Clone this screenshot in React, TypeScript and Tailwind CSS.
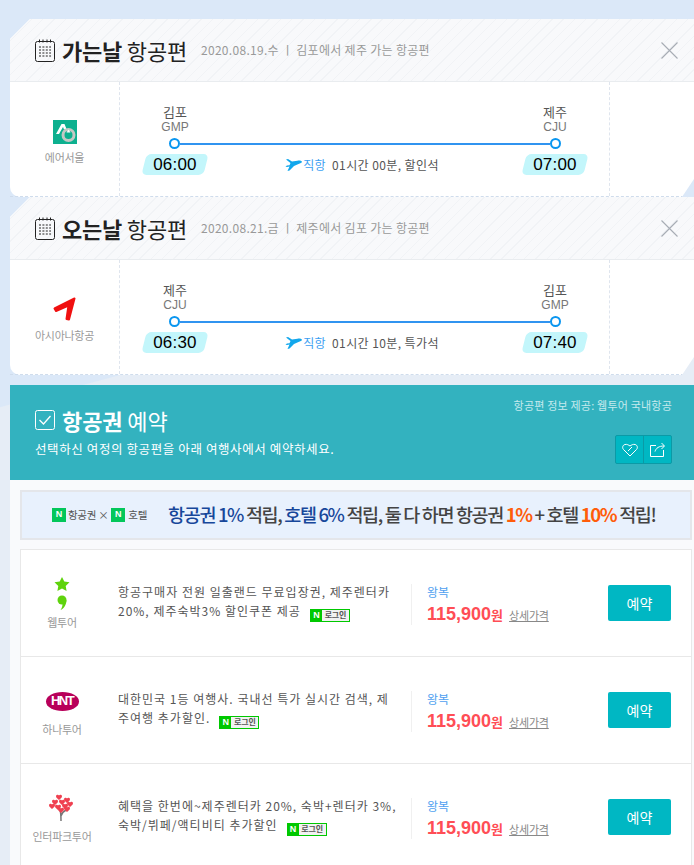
import React from 'react';

const KR = 'font-["Noto_Sans_CJK_KR","Noto_Sans",sans-serif]';

function CalendarIcon() {
  return (
    <svg width="20" height="23" viewBox="0 0 20 23" fill="none" stroke="#222" strokeWidth="1">
      <rect x="0.5" y="2.5" width="19" height="20" rx="2" />
      <path d="M4.5 0.5v3M8 0.5v3M12 0.5v3M15.5 0.5v3" />
      <path d="M4 8h12M4 11h12M4 14h12M4 17h12" strokeDasharray="2 1.4" />
    </svg>
  );
}

function PlaneIcon() {
  return (
    <svg width="17" height="14" viewBox="0 0 17 14" fill="#12a7ec">
      <path d="M1 1.5 3 1l4 2.6 5.5-.9c2-.3 4 .2 4.500 1 .2.700-1.500 1.600-3.500 2.300L9 8l-4.500 4.500-2 .5 2-4.500L2 9 .5 8.500 2 7.500 4.500 7.300 5.500 5z" />
    </svg>
  );
}

function AirSeoulLogo() {
  return (
    <svg width="24" height="24" viewBox="0 0 24 24">
      <rect width="24" height="24" fill="#0db08f" />
      <path d="M3 14 8.500 4h3l2 5-2.500.5L10 7l-4 7z" fill="#fff" />
      <circle cx="15.500" cy="15" r="5.500" fill="none" stroke="#c4c8c4" strokeWidth="3" />
      <path d="M15.500 9.500l-2 3h4z" fill="#fff" />
    </svg>
  );
}

function AsianaLogo() {
  return (
    <svg width="25" height="25" viewBox="0 0 25 25">
      <path
        d="M2.500 11.500 22.500 1.500 17 22.500 14.500 22 16.500 8.500 4 14z"
        fill="#f01010"
        stroke="#f01010"
        strokeWidth="2"
        strokeLinejoin="round"
      />
    </svg>
  );
}

function WebtourLogo() {
  return (
    <svg width="16" height="34" viewBox="0 0 16 34" fill="#5fd30d">
      <path d="M8 0l2.300 4.600 5.200.7-3.800 3.600.9 5.100L8 11.600 3.400 14l.9-5.100L.5 5.300l5.200-.7z" />
      <circle cx="8" cy="23" r="4.500" />
      <path d="M12.500 23c0 5-3 9-6 10 1.500-2 2-4 2-6z" />
    </svg>
  );
}

function HntLogo() {
  return (
    <div className="flex h-[19px] w-[33px] items-center justify-center rounded-[50%] bg-[#b8005a] font-['Liberation_Sans',sans-serif] text-[13px] font-bold tracking-[-1.500px] text-white">
      HNT
    </div>
  );
}

function TreeLogo() {
  const hearts = [
    [10, 3], [6, 8], [13, 8], [18, 6], [3, 12], [9, 13], [16, 12], [21, 10], [18, 15], [12, 16],
  ];
  return (
    <svg width="26" height="28" viewBox="0 0 26 28">
      <path d="M12 27c0-5 0-8-1-11M12 22c1-3 3-5 5-6" stroke="#777" strokeWidth="1.500" fill="none" />
      {hearts.map(([x, y], i) => (
        <path key={i} transform={`translate(${x} ${y})`} d="M0 -1.500a1.600 1.600 0 0 0-3 .8C-3 1 -1 2 0 3 1 2 3 1 3-.7a1.600 1.600 0 0 0-3-.8z" fill="#ef4050" />
      ))}
    </svg>
  );
}

function NaverLogin() {
  return (
    <span className="ml-[9px] inline-flex h-[13px] w-[40px] items-stretch border border-[#00c800] align-[-2px] leading-none tracking-normal">
      <span className="flex w-[11px] items-center justify-center bg-[#00c800] font-['Liberation_Sans',sans-serif] text-[9px] font-bold text-white">N</span>
      <span className="flex flex-1 items-center justify-center bg-[#f2f2f2] text-[8px] font-bold tracking-[-0.200px] text-[#555]">로그인</span>
    </span>
  );
}

function TimeTag({ time }: { time: string }) {
  return (
    <div className="relative flex h-[21px] w-[62px] items-center justify-center">
      <span className="absolute inset-0 -skew-x-[14deg] rounded-[5px] bg-[#c3f6fb]" />
      <span className="relative font-['Liberation_Sans',sans-serif] text-[17px] tracking-[0.200px] text-black">{time}</span>
    </div>
  );
}

function FlightCard({
  title,
  titleRest,
  info,
  airline,
  logo,
  from,
  fromCode,
  to,
  toCode,
  dep,
  arr,
  detail,
}: {
  title: string;
  titleRest: string;
  info: string;
  airline: string;
  logo: React.ReactNode;
  from: string;
  fromCode: string;
  to: string;
  toCode: string;
  dep: string;
  arr: string;
  detail: string;
}) {
  return (
    <section className="h-[178px] [clip-path:polygon(20px_0,100%_0,100%_160px,calc(100%-12px)_100%,20px_100%,0_100%,0_20px)] bg-white rounded-bl-[10px]">
      <div className="flex h-[63px] items-center border-b border-[#e9ecef] bg-[repeating-linear-gradient(135deg,#f8f9fb_0,#f8f9fb_7px,#f1f3f6_7px,#f1f3f6_8px)] pl-[25px] pr-[16px]">
        <CalendarIcon />
        <h2 className="ml-[7px] text-[22px] leading-none tracking-[-0.200px] text-[#222]">
          <b className="font-bold">{title}</b> {titleRest}
        </h2>
        <p className="ml-[14px] text-[12px] tracking-[0.300px] text-[#999]">{info}</p>
        <svg className="ml-auto" width="17" height="17" viewBox="0 0 17 17" stroke="#a7adb5" strokeWidth="1.100">
          <path d="M.5.5l16 16M16.500.5l-16 16" />
        </svg>
      </div>
      <div className="flex h-[115px] border-b border-dashed border-[#cfdcec]">
        <div className="flex w-[110px] flex-col items-center border-r border-dashed border-[#dfe5ee]">
          <div className="mt-[37px] flex h-[25px] items-center justify-center">{logo}</div>
          <p className="mt-[5px] text-[11px] tracking-[-0.300px] text-[#999]">{airline}</p>
        </div>
        <div className="w-[490px] border-r border-dashed border-[#dfe5ee] pl-[24px] pr-[23px] pt-[21px]">
          <div className="flex justify-between">
            {[[from, fromCode], [to, toCode]].map(([name, code]) => (
              <div key={code} className="w-[62px] text-center">
                <p className="text-[13px] leading-[17px] text-[#555]">{name}</p>
                <p className="font-['Liberation_Sans',sans-serif] text-[12px] leading-[15px] text-[#777]">{code}</p>
              </div>
            ))}
          </div>
          <div className="mt-[3px] flex h-[11px] items-center px-[25px]">
            <span className="h-[11px] w-[11px] shrink-0 rounded-full border-2 border-[#0a96f0] bg-white" />
            <span className="h-[2px] flex-1 bg-[#3094f0]" />
            <span className="h-[11px] w-[11px] shrink-0 rounded-full border-2 border-[#0a96f0] bg-white" />
          </div>
          <div className="mt-[5px] flex items-center justify-between">
            <TimeTag time={dep} />
            <p className="mr-[6px] flex items-center text-[12px] tracking-[0.400px] text-[#555]">
              <PlaneIcon />
              <span className="ml-[1px] text-[#3ba0f2]">직항</span>
              <span className="ml-[6px]">{detail}</span>
            </p>
            <TimeTag time={arr} />
          </div>
        </div>
      </div>
    </section>
  );
}

const agencies = [
  {
    name: '웹투어',
    logo: <WebtourLogo />,
    desc: '항공구매자 전원 일출랜드 무료입장권, 제주렌터카 20%, 제주숙박3% 할인쿠폰 제공',
  },
  {
    name: '하나투어',
    logo: <HntLogo />,
    desc: '대한민국 1등 여행사. 국내선 특가 실시간 검색, 제주여행 추가할인.',
  },
  {
    name: '인터파크투어',
    logo: <TreeLogo />,
    desc: '혜택을 한번에~제주렌터카 20%, 숙박+렌터카 3%, 숙박/뷔페/액티비티 추가할인',
  },
];

function AgencyRow({ name, logo, desc }: (typeof agencies)[number]) {
  return (
    <li className="flex h-[107px] items-stretch border-b border-[#e8e8e8]">
      <div className="flex w-[82px] shrink-0 flex-col items-center pt-[27px]">
        <div className="flex h-[34px] items-center">{logo}</div>
        <p className="mt-[4px] text-[11px] leading-[14px] tracking-[-0.300px] text-[#999]">{name}</p>
      </div>
      <div className="ml-[15px] flex w-[293px] shrink-0 items-center self-center pb-[3px]">
        <p className="w-[282px] text-[12px] leading-[19px] tracking-[1px] text-[#555]">
          {desc}
          <NaverLogin />
        </p>
      </div>
      <div className="my-[34px] flex h-[41px] w-[197px] shrink-0 flex-col border-l border-[#f0f0f0] pl-[15px]">
        <p className="text-[12px] leading-[16px] text-[#4f9ff0]">왕복</p>
        <p className="mt-[4px] flex items-baseline leading-[20px]">
          <span className="font-['Liberation_Sans',sans-serif] text-[18px] font-bold text-[#ff4d55]">115,900</span>
          <span className="text-[13px] font-bold text-[#ff4d55]">원</span>
          <a className="ml-[6px] text-[11px] tracking-[-0.200px] text-[#888] underline">상세가격</a>
        </p>
      </div>
      <button className="my-[35px] h-[36px] w-[63px] shrink-0 rounded-[2px] bg-[#00b7c3] text-[14px] text-white">예약</button>
    </li>
  );
}

export default function App() {
  return (
    <div className={`h-[865px] overflow-hidden bg-[linear-gradient(165deg,#dbe8f8_0,#dbe8f8_38.7%,#e6edf6_38.8%,#e6edf6_100%)] pl-[10px] pt-[19px] ${KR}`}>
      <FlightCard
        title="가는날"
        titleRest="항공편"
        info="2020.08.19.수 ㅣ 김포에서 제주 가는 항공편"
        airline="에어서울"
        logo={<AirSeoulLogo />}
        from="김포"
        fromCode="GMP"
        to="제주"
        toCode="CJU"
        dep="06:00"
        arr="07:00"
        detail="01시간 00분, 할인석"
      />
      <FlightCard
        title="오는날"
        titleRest="항공편"
        info="2020.08.21.금 ㅣ 제주에서 김포 가는 항공편"
        airline="아시아나항공"
        logo={<AsianaLogo />}
        from="제주"
        fromCode="CJU"
        to="김포"
        toCode="GMP"
        dep="06:30"
        arr="07:40"
        detail="01시간 10분, 특가석"
      />

      <div className="mt-[10px] bg-[#f9fafc]">
        <section className="relative h-[95px] bg-[#33b2bf] pl-[25px] pt-[22px] text-white">
          <div className="flex items-center">
            <svg width="20" height="20" viewBox="0 0 20 20" fill="none" stroke="#fff">
              <rect x="0.500" y="0.500" width="19" height="19" rx="2" />
              <path d="M4.500 10l4 4 7-8" strokeWidth="1.300" />
            </svg>
            <h2 className="ml-[7px] text-[22px] leading-[26px] tracking-[-0.100px]">
              <b className="font-bold">항공권</b> 예약
            </h2>
          </div>
          <p className="mt-[8px] text-[12.500px] leading-[16px] tracking-[0.600px] text-white">선택하신 여정의 항공편을 아래 여행사에서 예약하세요.</p>
          <p className="absolute right-[22px] top-[12px] text-[11px] tracking-[0.200px] text-[#c5eaee]">항공편 정보 제공: 웹투어 국내항공</p>
          <div className="absolute right-[22px] top-[50px] flex h-[29px] w-[57px] rounded-[2px] border border-[#0a9aa6] bg-[#00b7c3]">
            <button className="flex flex-1 items-center justify-center border-r border-[#0a9aa6]">
              <svg width="16" height="14" viewBox="0 0 16 14" fill="none" stroke="#fff">
                <path d="M8 13 1.500 6.500C0 5 .5 2 3 1.500 5 1 6.500 2 8 3c1.500-1 3-2 5-1.500 2.500.5 3 3.500 1.500 5z" />
                <path d="M6 8l4-4" />
              </svg>
            </button>
            <button className="flex flex-1 items-center justify-center">
              <svg width="16" height="15" viewBox="0 0 16 15" fill="none" stroke="#fff">
                <path d="M6 3.500H.5v11h13V8" />
                <path d="M5 9.500C6 6 9 4 14 4M11.500 1l3 3-3 3" />
              </svg>
            </button>
          </div>
        </section>

        <div className="px-[10px] pt-[10px]">
          <div className="flex h-[50px] w-[672px] items-center border-2 border-[#e4e6ea] bg-[#e8f1fd] pl-[30px]">
            <span className="flex h-[14px] w-[14px] items-center justify-center bg-[#03c75a] font-['Liberation_Sans',sans-serif] text-[9px] font-bold text-white">N</span>
            <span className="ml-[2px] text-[10.500px] tracking-[-0.300px] text-[#555]">항공권 × </span>
            <span className="ml-[3px] flex h-[14px] w-[14px] items-center justify-center bg-[#03c75a] font-['Liberation_Sans',sans-serif] text-[9px] font-bold text-white">N</span>
            <span className="ml-[3px] text-[10.500px] tracking-[-0.300px] text-[#555]">호텔</span>
            <p className="ml-[21px] whitespace-nowrap text-[18.500px] font-medium tracking-[-1.350px] text-[#444]">
              <span className="text-[#17479a]">항공권 1%</span> 적립, <span className="text-[#17479a]">호텔 6%</span> 적립, 둘 다 하면 항공권 <span className="font-bold text-[#ff5c0a]">1%</span> + 호텔 <span className="font-bold text-[#ff5c0a]">10%</span> 적립!
            </p>
          </div>
          <ul className="mt-[9px] w-[672px] border border-[#e8e8e8] bg-white">
            {agencies.map((a) => (
              <AgencyRow key={a.name} {...a} />
            ))}
          </ul>
        </div>
      </div>
    </div>
  );
}
